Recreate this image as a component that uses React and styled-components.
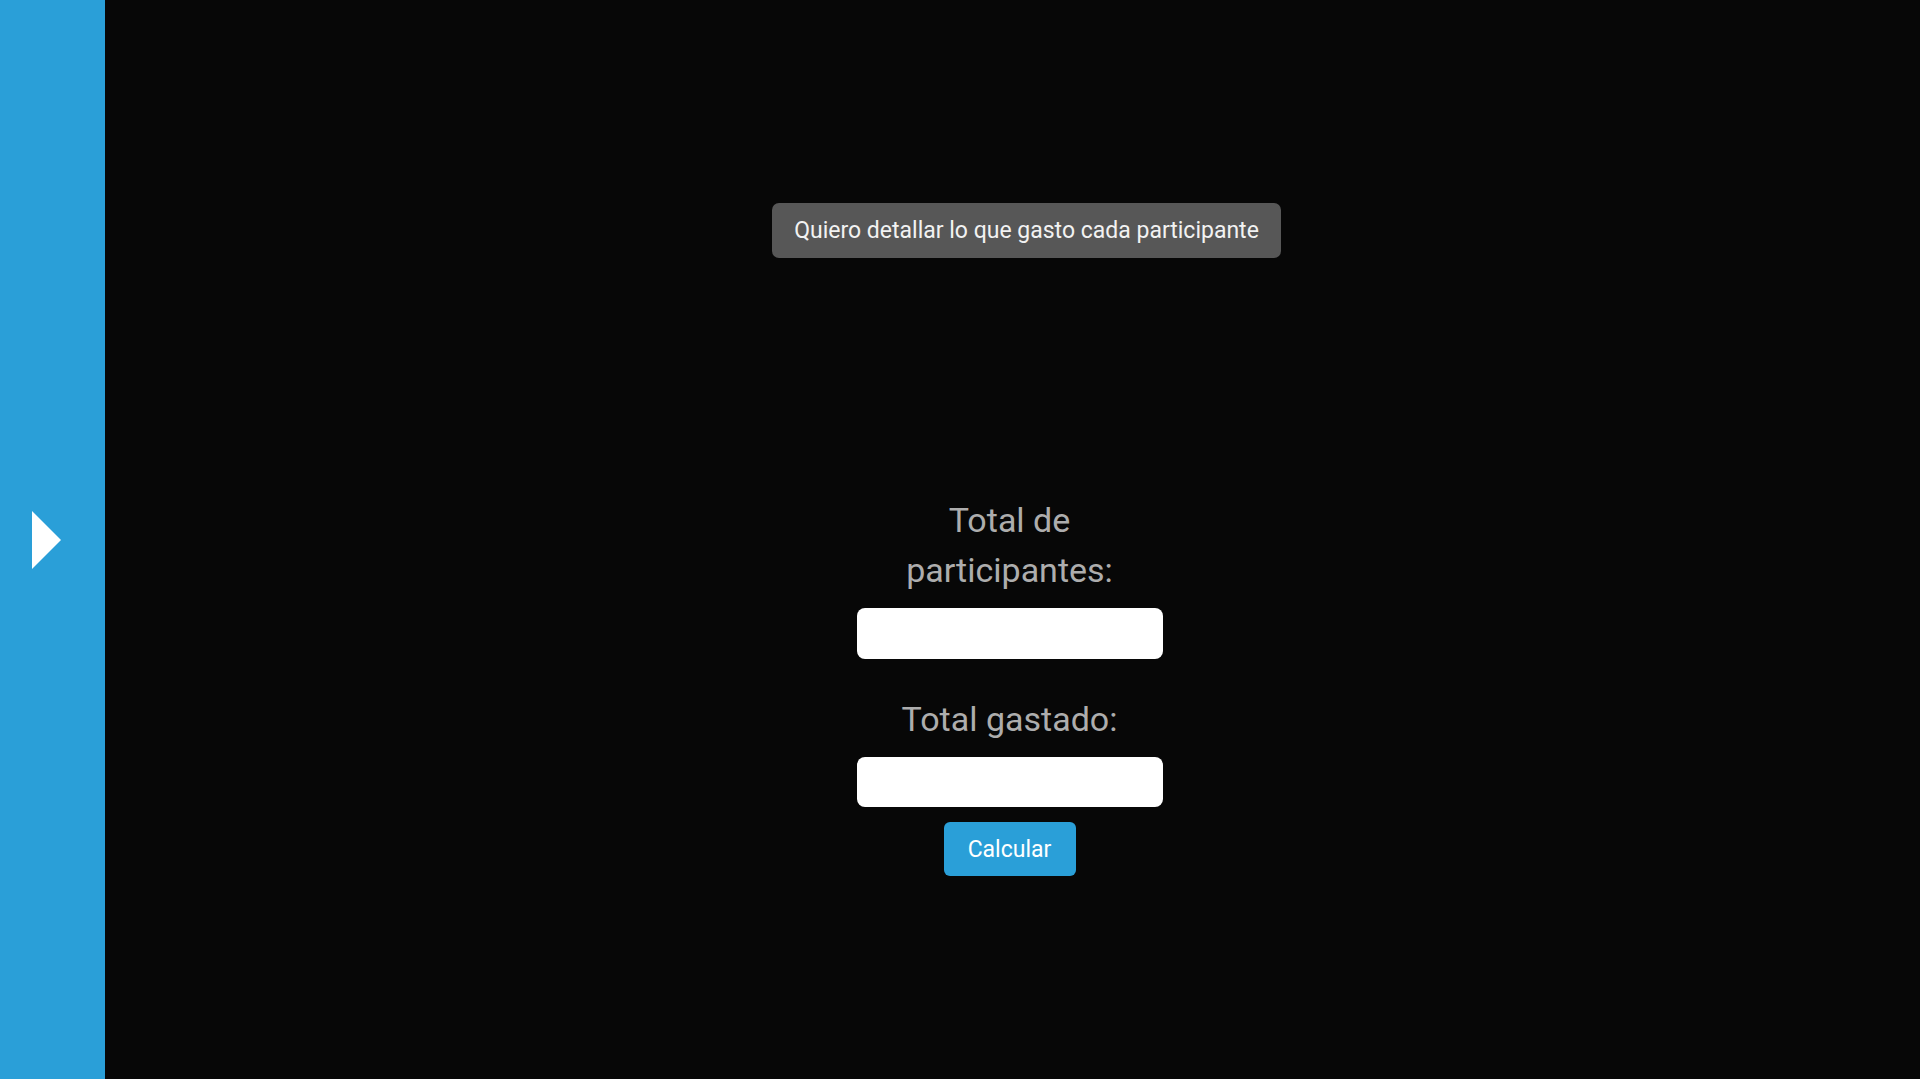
import React, { useState } from "react";
import styled, { createGlobalStyle } from "styled-components";

const GlobalStyle = createGlobalStyle`
  html, body {
    margin: 0;
    padding: 0;
    background: #070707;
    font-family: Roboto, "Noto Sans", Arial, sans-serif;
  }
`;

const Layout = styled.div`
  display: flex;
  width: 100%;
  height: 100vh;
  overflow: hidden;
`;

const Sidebar = styled.aside`
  width: 105px;
  flex-shrink: 0;
  background: #2a9fd8;
  display: flex;
  align-items: center;
  padding-left: 32px;
  box-sizing: border-box;
`;

const ToggleArrow = styled.button`
  width: 29px;
  height: 58px;
  padding: 0;
  border: none;
  background: transparent;
  cursor: pointer;
  display: block;
`;

const Main = styled.main`
  flex: 1;
  background: #070707;
  display: flex;
  flex-direction: column;
  align-items: center;
  padding-top: 203px;
  box-sizing: border-box;
`;

const DetailButton = styled.button`
  margin-left: 28px;
  width: 509px;
  height: 55px;
  border: none;
  border-radius: 7px;
  background: #575757;
  color: #f2f2f2;
  font-family: Roboto, "Noto Sans", Arial, sans-serif;
  font-size: 23px;
  cursor: pointer;
`;

const Form = styled.form`
  margin-top: 237px;
  margin-right: 6px;
  width: 306px;
  display: flex;
  flex-direction: column;
  align-items: center;
`;

const Field = styled.div`
  width: 100%;
  display: flex;
  flex-direction: column;
  align-items: center;
  gap: 13px;
  margin-bottom: ${(p) => p.$spacing}px;
`;

const Label = styled.label`
  color: #adadad;
  font-size: 34px;
  line-height: 50px;
  text-align: center;
`;

const Input = styled.input`
  width: 100%;
  height: ${(p) => p.$height}px;
  box-sizing: border-box;
  border: none;
  border-radius: 8px;
  background: #ffffff;
  font-family: Roboto, "Noto Sans", Arial, sans-serif;
  font-size: 22px;
  padding: 0 14px;
  outline: none;
`;

const SubmitButton = styled.button`
  height: 54px;
  width: 132px;
  border: none;
  border-radius: 6px;
  background: #2a9fd8;
  color: #ffffff;
  font-family: Roboto, "Noto Sans", Arial, sans-serif;
  font-size: 23px;
  cursor: pointer;
`;

export default function App() {
  const [people, setPeople] = useState("");
  const [total, setTotal] = useState("");

  return (
    <>
      <GlobalStyle />
      <Layout>
        <Sidebar>
          <ToggleArrow aria-label="Abrir menú">
            <svg width="29" height="58" viewBox="0 0 29 58">
              <polygon points="0,0 29,29 0,58" fill="#ffffff" />
            </svg>
          </ToggleArrow>
        </Sidebar>
        <Main>
          <DetailButton type="button">
            Quiero detallar lo que gasto cada participante
          </DetailButton>
          <Form onSubmit={(e) => e.preventDefault()}>
            <Field $spacing={35}>
              <Label htmlFor="people">Total de participantes:</Label>
              <Input
                id="people"
                $height={51}
                value={people}
                onChange={(e) => setPeople(e.target.value)}
              />
            </Field>
            <Field $spacing={15}>
              <Label htmlFor="total">Total gastado:</Label>
              <Input
                id="total"
                $height={50}
                value={total}
                onChange={(e) => setTotal(e.target.value)}
              />
            </Field>
            <SubmitButton type="submit">Calcular</SubmitButton>
          </Form>
        </Main>
      </Layout>
    </>
  );
}
